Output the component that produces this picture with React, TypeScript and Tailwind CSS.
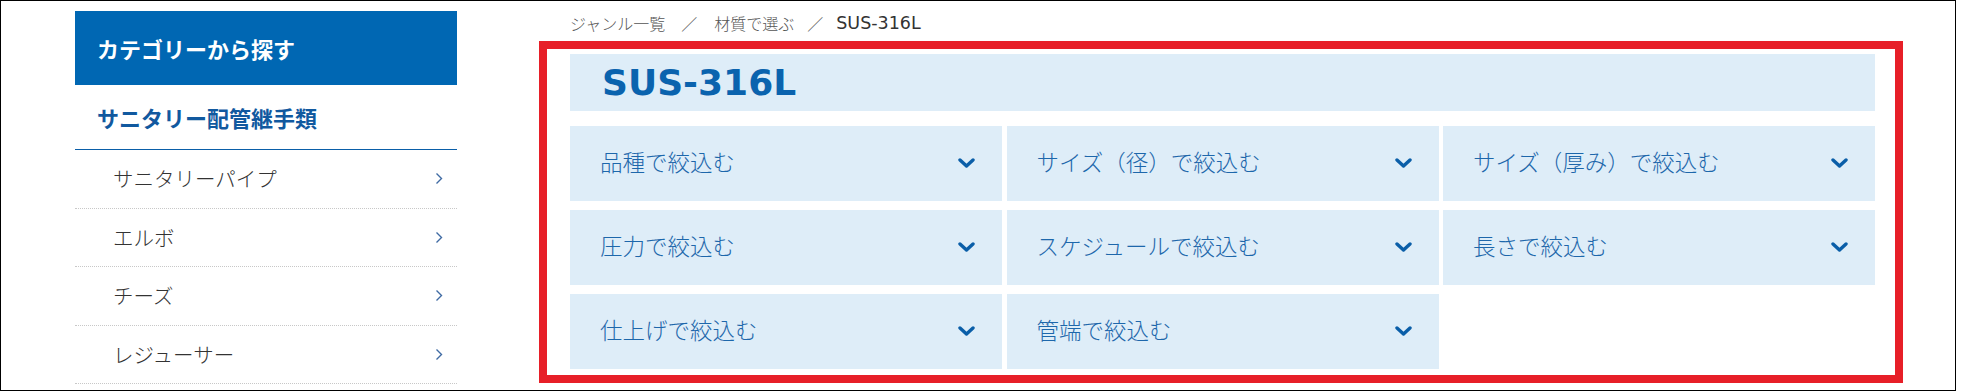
import React from "react";

const jp = "font-['Noto_Sans_CJK_JP',sans-serif]";

function ChevronDown() {
  return (
    <svg width="17" height="11" viewBox="0 0 17 11" className="shrink-0">
      <path d="M2 2 L8.5 8 L15 2" fill="none" stroke="#0a5ea8" strokeWidth="3.4" strokeLinecap="round" strokeLinejoin="round" />
    </svg>
  );
}

function ChevronRight() {
  return (
    <svg width="8" height="13" viewBox="0 0 8 13" className="shrink-0">
      <path d="M1.5 1.5 L6.5 6.5 L1.5 11.5" fill="none" stroke="#3f6aa3" strokeWidth="1.4" />
    </svg>
  );
}

const sideItems = ["サニタリーパイプ", "エルボ", "チーズ", "レジューサー"];
const filters = [
  "品種で絞込む",
  "サイズ（径）で絞込む",
  "サイズ（厚み）で絞込む",
  "圧力で絞込む",
  "スケジュールで絞込む",
  "長さで絞込む",
  "仕上げで絞込む",
  "管端で絞込む",
];

export default function App() {
  return (
    <div className={`w-[1961px] h-[391px] bg-white ${jp}`}>
      <div className="w-[1956px] h-[391px] border border-black overflow-hidden flex">
        {/* Sidebar */}
        <aside className="ml-[74px] mt-[10px] w-[382px] shrink-0">
          <div className="h-[74px] bg-[#0067b3] flex items-center pl-[22px] text-white text-[22px] font-bold">
            カテゴリーから探す
          </div>
          <div className="h-[65px] border-b border-[#0a5ea8] flex items-center pl-[22px] text-[#11599f] text-[22px] font-bold">
            サニタリー配管継手類
          </div>
          {sideItems.map((t) => (
            <div
              key={t}
              className="h-[58.5px] border-b border-dotted border-[#c8c8c8] flex items-center justify-between pl-[38px] pr-[14px] text-[20.5px] font-light text-[#333]"
            >
              <span>{t}</span>
              <ChevronRight />
            </div>
          ))}
        </aside>

        {/* Main */}
        <main className="ml-[82px] w-[1364px] shrink-0">
          <div className="h-[40px] flex items-center pl-[31px] pt-[4px] text-[16px] font-light text-[#555]">
            <span>ジャンル一覧</span>
            <span className="ml-[16px] mr-[17px]">／</span>
            <span>材質で選ぶ</span>
            <span className="ml-[13px] mr-[13px]">／</span>
            <span className="font-['DejaVu_Sans',sans-serif] font-normal text-[17.5px] text-[#333]">SUS-316L</span>
          </div>
          <div className="border-8 border-[#e71f28] pl-[23px] pr-[20px] pt-[5px] pb-[6px]">
            <div className="h-[57px] bg-[#deedf8] flex items-center pl-[32px]">
              <h1 className="font-['DejaVu_Sans',sans-serif] font-bold text-[36px] text-[#0a63ae] leading-none">
                SUS-316L
              </h1>
            </div>
            <div className="mt-[15px] grid grid-cols-3 gap-x-[4.5px] gap-y-[9px]">
              {filters.map((f) => (
                <div
                  key={f}
                  className="h-[75px] bg-[#deedf8] flex items-center justify-between pl-[30px] pr-[27px] text-[22.5px] font-light text-[#1d67ab]"
                >
                  <span className="mb-[3px]">{f}</span>
                  <ChevronDown />
                </div>
              ))}
            </div>
          </div>
        </main>
      </div>
    </div>
  );
}
